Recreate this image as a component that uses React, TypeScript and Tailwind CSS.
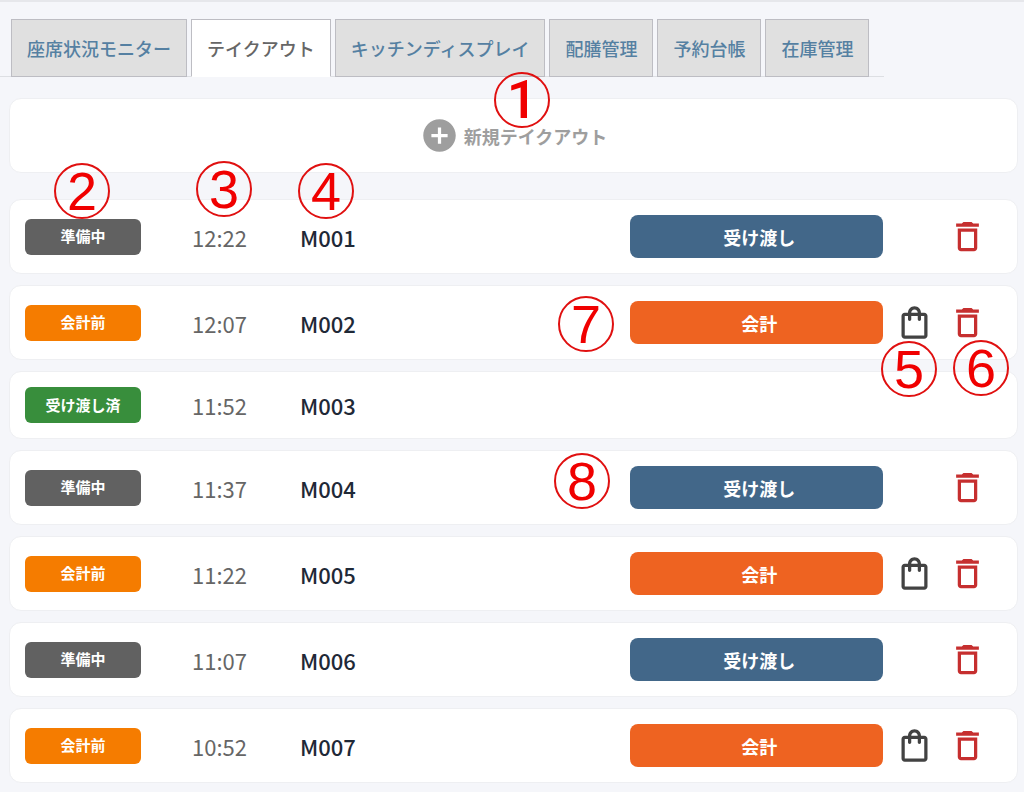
import { useState } from "react";
import clsx from "clsx";
import { MdAddCircle, MdDeleteOutline, MdOutlineShoppingBag } from "react-icons/md";

type Status = "preparing" | "unpaid" | "delivered";

type Order = {
  id: string;
  time: string;
  status: Status;
};

const TABS = [
  "座席状況モニター",
  "テイクアウト",
  "キッチンディスプレイ",
  "配膳管理",
  "予約台帳",
  "在庫管理",
];

const ORDERS: Order[] = [
  { id: "M001", time: "12:22", status: "preparing" },
  { id: "M002", time: "12:07", status: "unpaid" },
  { id: "M003", time: "11:52", status: "delivered" },
  { id: "M004", time: "11:37", status: "preparing" },
  { id: "M005", time: "11:22", status: "unpaid" },
  { id: "M006", time: "11:07", status: "preparing" },
  { id: "M007", time: "10:52", status: "unpaid" },
];

const STATUS_LABEL: Record<Status, string> = {
  preparing: "準備中",
  unpaid: "会計前",
  delivered: "受け渡し済",
};

const STATUS_COLOR: Record<Status, string> = {
  preparing: "bg-[#616161]",
  unpaid: "bg-[#f57c00]",
  delivered: "bg-[#388e3c]",
};

// numbered callouts laid over the screen
const MARKERS = [
  { label: "1", position: "left-[494px] top-[70px]" },
  { label: "2", position: "left-[54px] top-[161px]" },
  { label: "3", position: "left-[196px] top-[159px]" },
  { label: "4", position: "left-[298px] top-[161px]" },
  { label: "5", position: "right-[87px] top-[339px]" },
  { label: "6", position: "right-[15px] top-[338px]" },
  { label: "7", position: "right-[410px] top-[294px]" },
  { label: "8", position: "right-[414px] top-[451px]" },
];

function OrderRow({ order }: { order: Order }) {
  const { id, time, status } = order;

  return (
    <li className="flex items-center rounded-xl border border-[#eeeff2] bg-white py-[15px] pr-[28px] pl-[15px]">
      <span
        className={clsx(
          "flex h-9 w-[116px] items-center justify-center rounded-md text-[15px] font-bold text-white",
          STATUS_COLOR[status]
        )}
      >
        {STATUS_LABEL[status]}
      </span>
      <time className="ml-[51px] w-[108px] text-[22px] leading-9 text-[#666666]">{time}</time>
      <span className="flex-[13] text-[22px] leading-9 font-medium text-[#1f2937]">{id}</span>

      {status !== "delivered" && (
        <>
          <button
            className={clsx(
              "h-[43px] flex-[10] rounded-lg text-lg font-bold text-white",
              status === "unpaid" ? "bg-[#ee6321]" : "bg-[#426789]"
            )}
          >
            <span className="pl-[6px]">{status === "unpaid" ? "会計" : "受け渡し"}</span>
          </button>
          <div className="flex w-[62px] justify-center">
            {status === "unpaid" && (
              <button aria-label="受け渡し" className="text-[#424242]">
                <MdOutlineShoppingBag size={39} />
              </button>
            )}
          </div>
          <button aria-label="削除" className="flex w-[44px] justify-center text-[#c62f2f]">
            <MdDeleteOutline size={39} />
          </button>
        </>
      )}
    </li>
  );
}

export default function App() {
  const [active, setActive] = useState("テイクアウト");

  return (
    <div className="relative min-h-screen border-t-2 border-[#e6e7eb] bg-[#f5f6fa] pt-[17px] pb-[9px] font-['Noto_Sans_CJK_JP',sans-serif]">
      <nav className="flex w-fit gap-1 border-b border-[#dddfe3] pr-[15px] pl-[11px]">
        {TABS.map((tab) => (
          <button
            key={tab}
            onClick={() => setActive(tab)}
            className={clsx(
              "-mb-px h-[58px] border border-[#bdbdc3] px-[15px] text-lg font-medium whitespace-nowrap",
              tab === active ? "border-b-white bg-white text-[#666666]" : "bg-[#e0e0e0] text-[#5580a2]"
            )}
          >
            {tab}
          </button>
        ))}
      </nav>

      <main className="mt-[21px] pr-[6px] pl-[9px]">
        <button className="flex h-[75px] w-full items-center justify-center gap-[5px] rounded-xl border border-[#eeeff2] bg-white text-lg font-bold text-[#9e9e9e]">
          <MdAddCircle size={39} />
          新規テイクアウト
        </button>

        <ul className="mt-[26px] flex flex-col gap-[11px]">
          {ORDERS.map((order) => (
            <OrderRow key={order.id} order={order} />
          ))}
        </ul>
      </main>

      {MARKERS.map(({ label, position }) => (
        <span
          key={label}
          className={clsx(
            "pointer-events-none absolute flex size-14 items-center justify-center rounded-full border-2 border-[#e01010] text-[54px] leading-none text-[#f00000]",
            label === "1" ? "font-[Roboto,sans-serif] font-medium" : "font-['Liberation_Sans',sans-serif]",
            position
          )}
        >
          {label}
        </span>
      ))}
    </div>
  );
}
